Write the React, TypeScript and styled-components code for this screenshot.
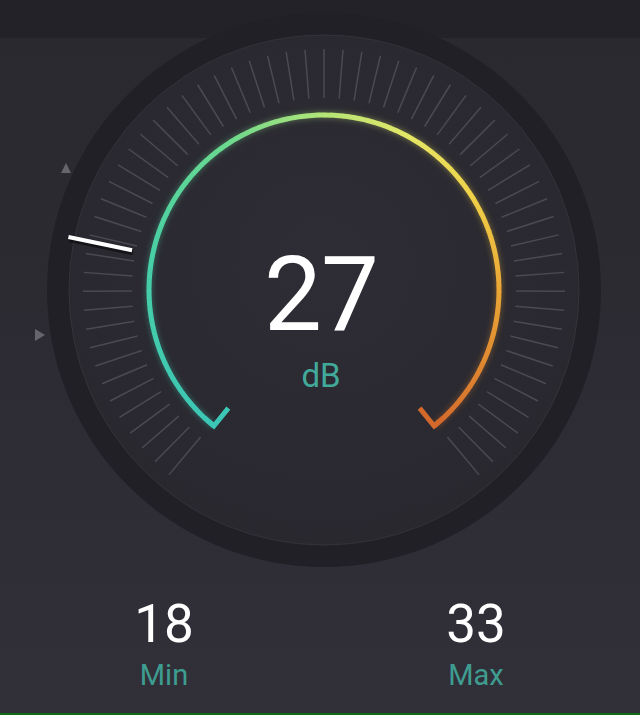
import React from 'react';
import styled, { createGlobalStyle } from 'styled-components';

const GlobalStyle = createGlobalStyle`
  html, body {
    margin: 0;
    padding: 0;
    background: #2b2a31;
  }
`;

const Screen = styled.div`
  width: 640px;
  height: 715px;
  display: flex;
  flex-direction: column;
  overflow: hidden;
  font-family: Roboto, "Liberation Sans", sans-serif;
  background: linear-gradient(
    to bottom,
    #232228 0px,
    #232228 38px,
    #29292f 38px,
    #2c2b32 300px,
    #313039 100%
  );
`;

const GaugeWrap = styled.div`
  display: grid;
  width: 640px;
  height: 580px;

  & > * {
    grid-area: 1 / 1;
  }
`;

const Dial = styled.svg`
  display: block;
  width: 640px;
  height: 580px;
`;

const Readout = styled.div`
  display: flex;
  flex-direction: column;
  align-items: center;
  padding-top: 243px;
  padding-left: 2px;
`;

const Value = styled.div`
  font-size: 103px;
  line-height: 103px;
  font-weight: 400;
  color: #ffffff;
  letter-spacing: -1px;
`;

const Unit = styled.div`
  margin-top: 13px;
  font-size: 33px;
  line-height: 33px;
  color: #42aa9b;
`;

const StatsRow = styled.div`
  display: grid;
  grid-template-columns: 312px 312px;
  padding: 0 8px;
  margin-top: 14px;
`;

const Stat = styled.div`
  display: flex;
  flex-direction: column;
  align-items: center;
`;

const StatValue = styled.div`
  font-size: 53px;
  line-height: 60px;
  color: #ffffff;
`;

const StatLabel = styled.div`
  margin-top: 5px;
  font-size: 29px;
  line-height: 32px;
  color: #3e9d90;
`;

const BottomLine = styled.div`
  margin-top: auto;
  height: 2px;
  background: #0f6a14;
`;

const CX = 324;
const CY = 290;

function polar(r: number, deg: number): [number, number] {
  const a = (deg * Math.PI) / 180;
  return [CX + r * Math.sin(a), CY - r * Math.cos(a)];
}

const STOPS: [number, string][] = [
  [0, '#3cc6b6'],
  [0.22, '#48cfa6'],
  [0.38, '#6bd98f'],
  [0.5, '#b4e577'],
  [0.6, '#e4e767'],
  [0.7, '#f0d34a'],
  [0.82, '#eaa636'],
  [1, '#d4692b'],
];

function hex(c: string) {
  return [1, 3, 5].map((i) => parseInt(c.slice(i, i + 2), 16));
}

function colorAt(t: number) {
  for (let i = 1; i < STOPS.length; i++) {
    if (t <= STOPS[i][0]) {
      const [t0, c0] = STOPS[i - 1];
      const [t1, c1] = STOPS[i];
      const k = (t - t0) / (t1 - t0);
      const a = hex(c0);
      const b = hex(c1);
      const m = a.map((v, j) => Math.round(v + (b[j] - v) * k));
      return `rgb(${m[0]},${m[1]},${m[2]})`;
    }
  }
  return STOPS[STOPS.length - 1][1];
}

const ARC_R = 175;
const ARC_START = -141;
const ARC_END = 141;
const SEGMENTS = 140;

function ArcSegments({ width, opacity }: { width: number; opacity: number }) {
  const segs = [];
  for (let i = 0; i < SEGMENTS; i++) {
    const a0 = ARC_START + ((ARC_END - ARC_START) * i) / SEGMENTS;
    const a1 = ARC_START + ((ARC_END - ARC_START) * (i + 1)) / SEGMENTS + 0.2;
    const [x0, y0] = polar(ARC_R, a0);
    const [x1, y1] = polar(ARC_R, Math.min(a1, ARC_END));
    segs.push(
      <line
        key={i}
        x1={x0}
        y1={y0}
        x2={x1}
        y2={y1}
        stroke={colorAt((i + 0.5) / SEGMENTS)}
        strokeWidth={width}
        opacity={opacity}
      />
    );
  }
  return <>{segs}</>;
}

function Hook({ angle, dir, color }: { angle: number; dir: number; color: string }) {
  const inner = polar(ARC_R - 23, angle);
  const end = polar(ARC_R, angle);
  const along = polar(ARC_R, angle + dir * 4);
  return (
    <polyline
      points={`${inner[0]},${inner[1]} ${end[0]},${end[1]} ${along[0]},${along[1]}`}
      fill="none"
      stroke={color}
      strokeWidth={5}
      strokeLinejoin="miter"
      strokeLinecap="butt"
    />
  );
}

function Ticks() {
  const count = 63;
  const ticks = [];
  for (let i = 0; i < count; i++) {
    const a = -140 + (280 * i) / (count - 1);
    const [x0, y0] = polar(192, a);
    const [x1, y1] = polar(241, a);
    ticks.push(
      <line key={i} x1={x0} y1={y0} x2={x1} y2={y1} stroke="#4a4a52" strokeWidth={1.5} />
    );
  }
  return <>{ticks}</>;
}

function Needle({ angle }: { angle: number }) {
  const [x0, y0] = polar(196, angle);
  const [x1, y1] = polar(261, angle);
  return (
    <>
      <line x1={x0 + 1} y1={y0 + 2} x2={x1 + 1} y2={y1 + 2} stroke="#0d0d10" strokeWidth={6} opacity={0.7} />
      <line x1={x0} y1={y0} x2={x1} y2={y1} stroke="#ffffff" strokeWidth={4} />
    </>
  );
}

function Gauge() {
  return (
    <Dial viewBox="0 0 640 580">
      <defs>
        <radialGradient id="face" cx="50%" cy="45%" r="55%">
          <stop offset="0%" stopColor="#2e2d35" />
          <stop offset="100%" stopColor="#29282f" />
        </radialGradient>
        <filter id="glow" x="-20%" y="-20%" width="140%" height="140%">
          <feGaussianBlur stdDeviation="2.5" />
        </filter>
      </defs>

      <circle cx={CX} cy={CY} r={277} fill="#212026" />
      <circle cx={CX} cy={CY} r={255} fill="url(#face)" stroke="#34333a" strokeWidth={1} />
      <Ticks />
      <Needle angle={-78.3} />

      <g filter="url(#glow)">
        <ArcSegments width={8} opacity={0.25} />
      </g>
      <ArcSegments width={5} opacity={1} />
      <Hook angle={ARC_START} dir={1} color={colorAt(0)} />
      <Hook angle={ARC_END} dir={-1} color={colorAt(1)} />

      <polygon points="61,173 71,173 66,163" fill="#66656c" />
      <polygon points="35,329 35,341 45,335" fill="#66656c" />
    </Dial>
  );
}

export default function App() {
  return (
    <Screen>
      <GlobalStyle />
      <GaugeWrap>
        <Gauge />
        <Readout>
          <Value>27</Value>
          <Unit>dB</Unit>
        </Readout>
      </GaugeWrap>
      <StatsRow>
        <Stat>
          <StatValue>18</StatValue>
          <StatLabel>Min</StatLabel>
        </Stat>
        <Stat>
          <StatValue>33</StatValue>
          <StatLabel>Max</StatLabel>
        </Stat>
      </StatsRow>
      <BottomLine />
    </Screen>
  );
}
